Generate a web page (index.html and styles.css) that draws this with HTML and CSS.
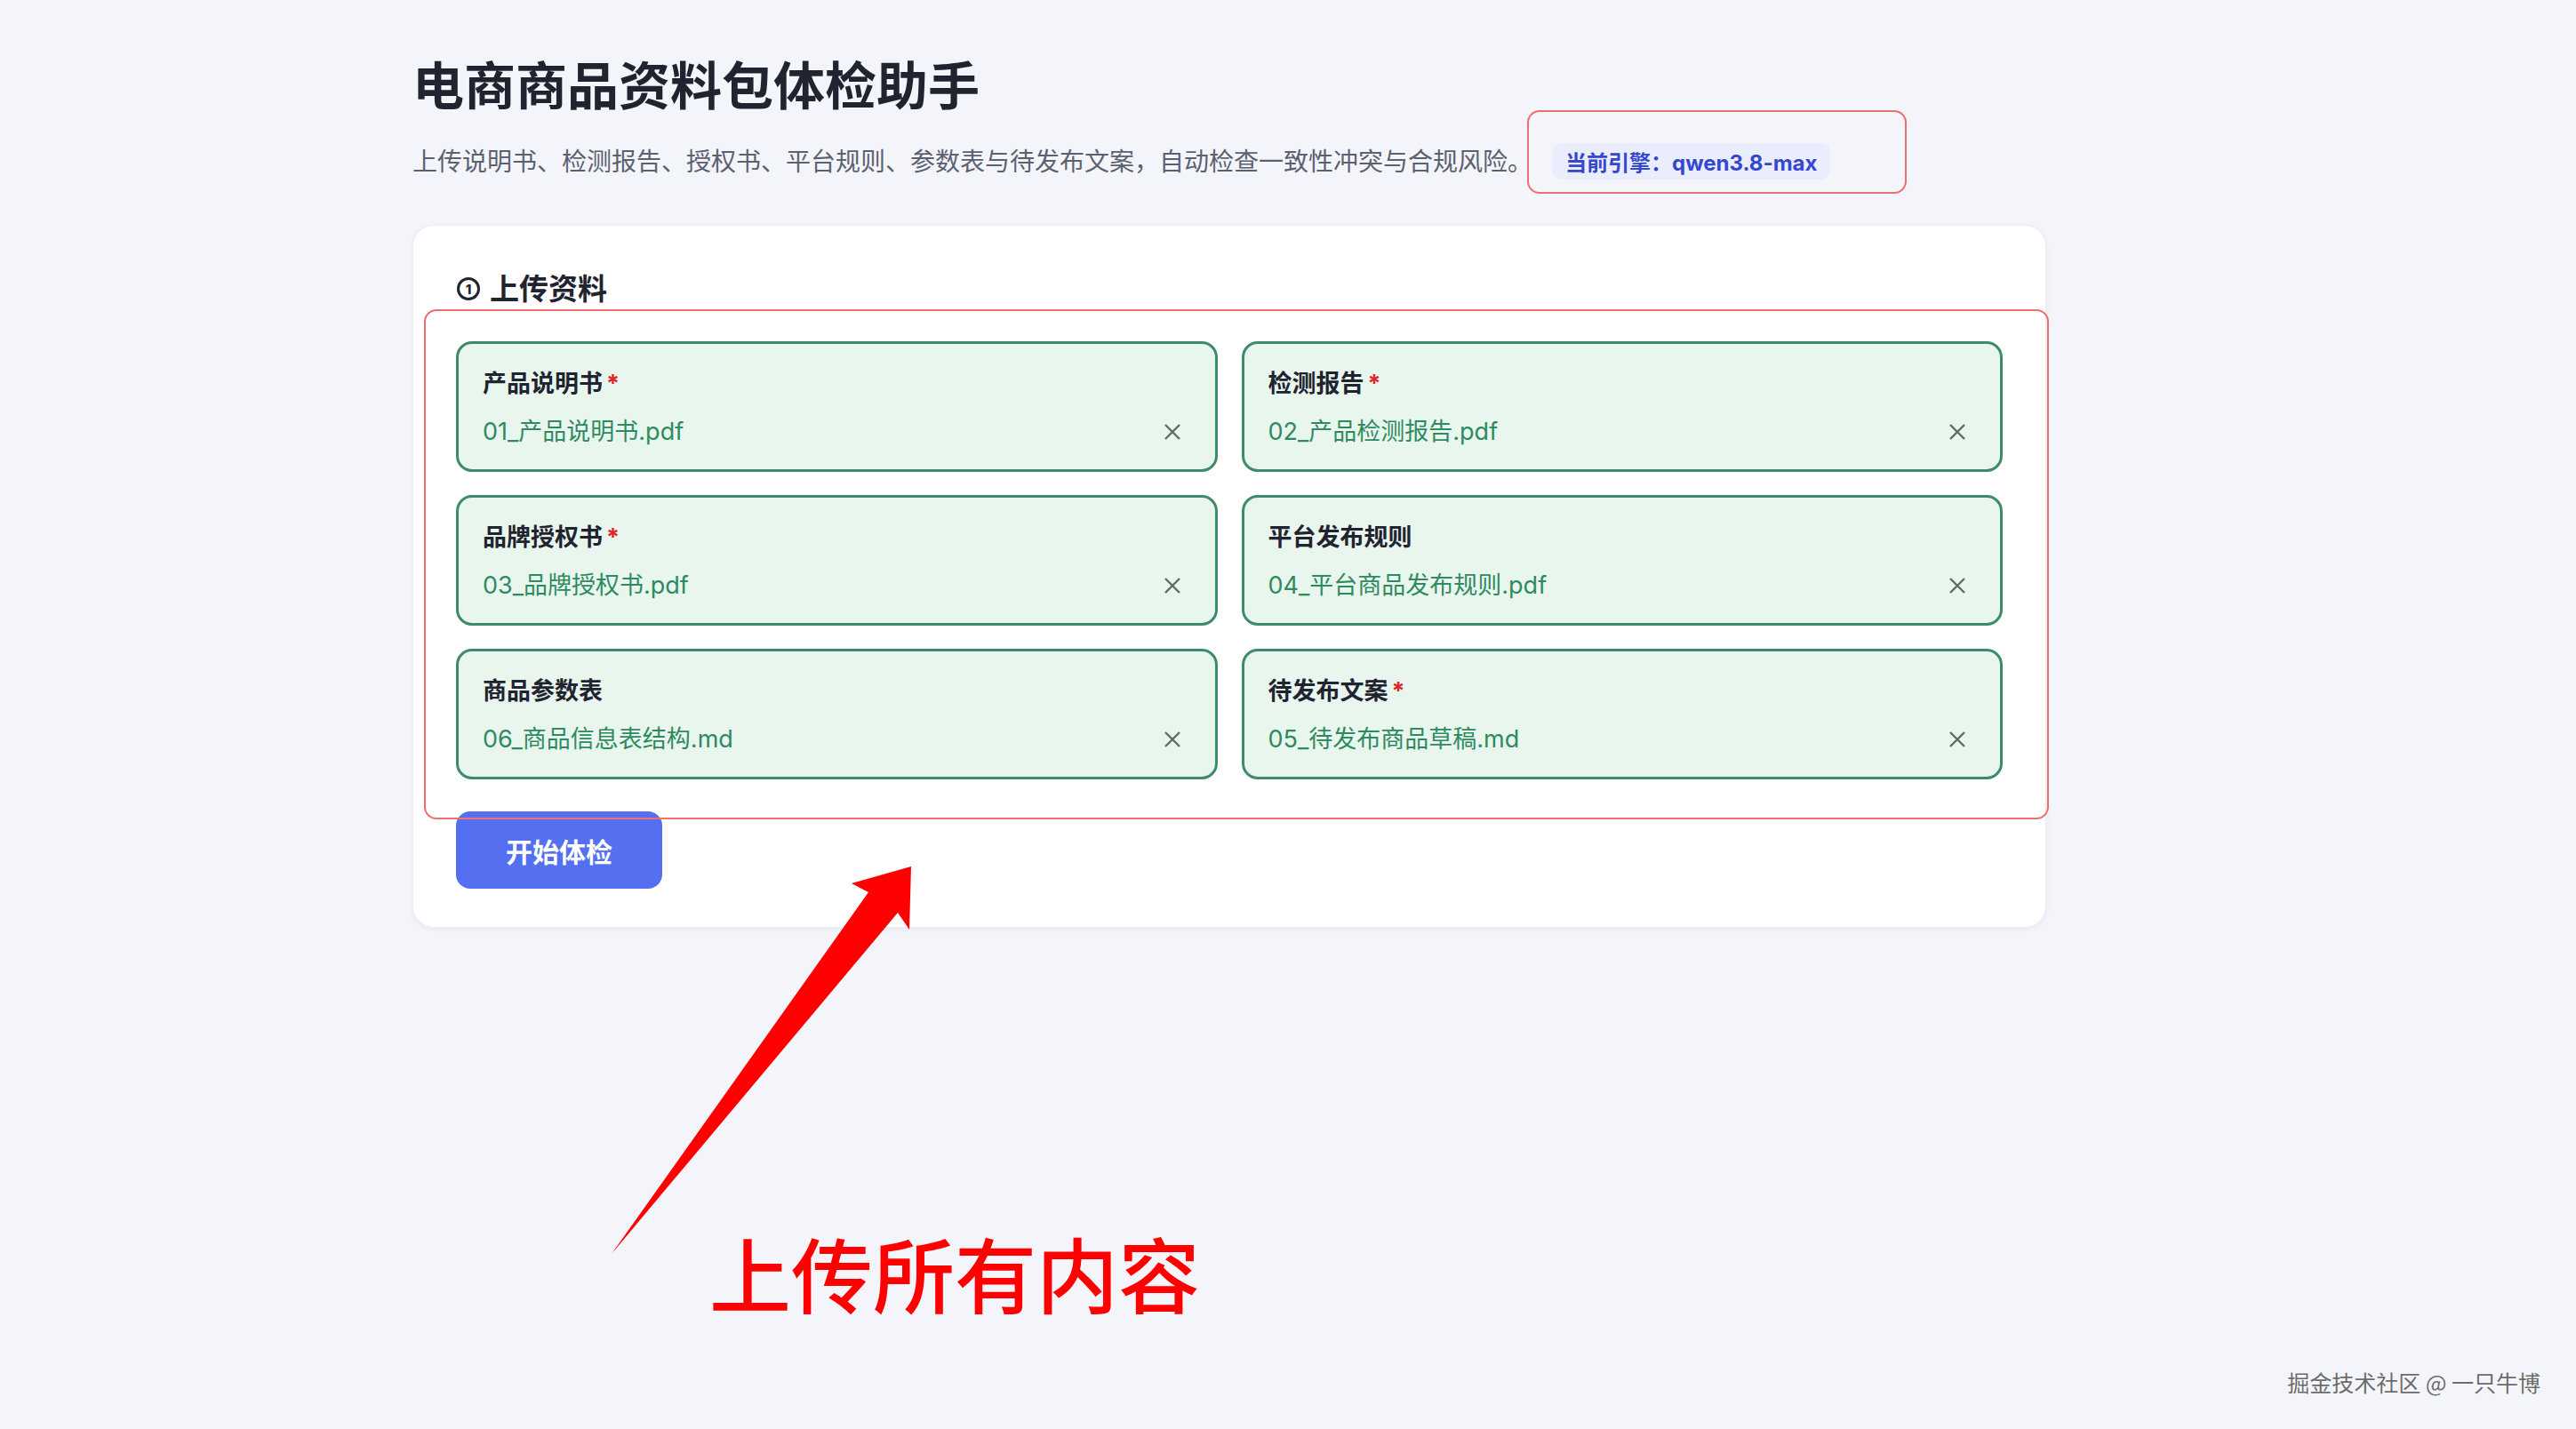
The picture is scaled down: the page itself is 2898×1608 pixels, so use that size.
FILE: index.html
```html
<!DOCTYPE html>
<html lang="zh-CN">
<head>
<meta charset="utf-8">
<title>电商商品资料包体检助手</title>
<link rel="stylesheet" href="styles.css">
</head>
<body>
<div class="page">
  <header class="hero">
    <h1 class="title">电商商品资料包体检助手</h1>
    <div class="sub-row">
      <p class="subtitle">上传说明书、检测报告、授权书、平台规则、参数表与待发布文案，自动检查一致性冲突与合规风险。</p>
      <div class="engine">当前引擎：qwen3.8-max<span class="mark mark-engine"></span></div>
    </div>
  </header>

  <section class="card">
    <h2 class="card-title"><span class="step">1</span>上传资料</h2>
    <div class="grid-wrap">
      <div class="file-grid">
        <div class="file">
          <div class="file-label">产品说明书<span class="req">*</span></div>
          <div class="file-row"><span class="file-name">01_产品说明书.pdf</span><svg class="x" viewBox="0 0 20 20"><path d="M2 2L18 18M18 2L2 18"/></svg></div>
        </div>
        <div class="file">
          <div class="file-label">检测报告<span class="req">*</span></div>
          <div class="file-row"><span class="file-name">02_产品检测报告.pdf</span><svg class="x" viewBox="0 0 20 20"><path d="M2 2L18 18M18 2L2 18"/></svg></div>
        </div>
        <div class="file">
          <div class="file-label">品牌授权书<span class="req">*</span></div>
          <div class="file-row"><span class="file-name">03_品牌授权书.pdf</span><svg class="x" viewBox="0 0 20 20"><path d="M2 2L18 18M18 2L2 18"/></svg></div>
        </div>
        <div class="file">
          <div class="file-label">平台发布规则</div>
          <div class="file-row"><span class="file-name">04_平台商品发布规则.pdf</span><svg class="x" viewBox="0 0 20 20"><path d="M2 2L18 18M18 2L2 18"/></svg></div>
        </div>
        <div class="file">
          <div class="file-label">商品参数表</div>
          <div class="file-row"><span class="file-name">06_商品信息表结构.md</span><svg class="x" viewBox="0 0 20 20"><path d="M2 2L18 18M18 2L2 18"/></svg></div>
        </div>
        <div class="file">
          <div class="file-label">待发布文案<span class="req">*</span></div>
          <div class="file-row"><span class="file-name">05_待发布商品草稿.md</span><svg class="x" viewBox="0 0 20 20"><path d="M2 2L18 18M18 2L2 18"/></svg></div>
        </div>
      </div>
      <span class="mark mark-grid"></span>
    </div>
    <button class="start" type="button">开始体检</button>
  </section>
</div>

<svg class="annot-arrow" viewBox="0 0 2898 1608" width="2898" height="1608">
  <polygon points="1025,975 1023,1046 1010,1027 688,1411 977,1004 958,994" fill="#ff0000"/>
</svg>
<div class="annot-text">上传所有内容</div>
<div class="watermark">掘金技术社区 @ 一只牛博</div>
</body>
</html>
```

FILE: styles.css
```css
* { box-sizing: border-box; }

html, body {
  margin: 0;
  padding: 0;
}

body {
  position: relative;
  min-height: 1608px;
  background: #f4f5fb;
  font-family: "Inter", "Noto Sans CJK SC", "Noto Sans", sans-serif;
  color: #1f2430;
}

.page {
  padding: 57px 0 0 464px;
  width: 2302px;
}

.hero {
  display: flex;
  flex-direction: column;
}

.title {
  margin: 0;
  font-size: 58px;
  line-height: 80px;
  font-weight: 700;
  color: #1f2430;
}

.sub-row {
  margin-top: 24px;
  display: flex;
  align-items: center;
  gap: 22px;
  height: 41px;
}

.subtitle {
  margin: 0;
  font-size: 28px;
  line-height: 40px;
  color: #5b6170;
}

.engine {
  position: relative;
  height: 41px;
  display: flex;
  align-items: center;
  padding: 0 15px;
  background: #eaedfb;
  border-radius: 10px;
  font-size: 24px;
  font-weight: 700;
  color: #3547cf;
  white-space: nowrap;
}

.mark {
  position: absolute;
  border: 2px solid #ef6f6f;
  border-radius: 14px;
  pointer-events: none;
}

.mark-engine {
  left: -28px;
  top: -37px;
  right: -86px;
  bottom: -16px;
}

.card {
  margin-top: 51px;
  background: #ffffff;
  border: 1px solid #eceef4;
  border-radius: 24px;
  box-shadow: 0 2px 6px rgba(30, 40, 80, 0.05);
  padding: 47px 48px 43px 48px;
}

.card-title {
  margin: 0 0 35px 0;
  font-size: 33px;
  line-height: 48px;
  font-weight: 700;
  color: #1f2430;
  display: flex;
  align-items: center;
}

.step {
  width: 26px;
  height: 26px;
  border: 3.5px solid #1f2430;
  border-radius: 50%;
  display: flex;
  align-items: center;
  justify-content: center;
  font-family: "Inter", sans-serif;
  font-size: 15px;
  line-height: 1;
  font-weight: 800;
  margin: 0 11px 0 1px;
}

.grid-wrap {
  position: relative;
}

.mark-grid {
  left: -36px;
  top: -36px;
  right: -52px;
  bottom: -45px;
  border-radius: 14px;
}

.file-grid {
  display: grid;
  grid-template-columns: 1fr 1fr;
  column-gap: 27px;
  row-gap: 26px;
}

.file {
  height: 147px;
  border: 3px solid #3d8b6a;
  border-radius: 18px;
  background: #e8f6ee;
  padding: 27px 27px 24px 27px;
  display: flex;
  flex-direction: column;
  gap: 18px;
}

.file-label {
  font-size: 27px;
  line-height: 36px;
  font-weight: 700;
  color: #1f2430;
}

.req {
  color: #e02424;
  margin-left: 4px;
}

.file-row {
  display: flex;
  align-items: center;
  justify-content: space-between;
  height: 36px;
}

.file-name {
  font-size: 27px;
  line-height: 36px;
  color: #2f8a60;
}

.x {
  width: 20px;
  height: 20px;
  margin-right: 11px;
  fill: none;
  stroke: #5f6a66;
  stroke-width: 2.4;
}

.start {
  margin-top: 36px;
  width: 232px;
  height: 87px;
  border: none;
  border-radius: 16px;
  background: #5470f0;
  color: #ffffff;
  font-family: "Noto Sans CJK SC", sans-serif;
  font-size: 30px;
  font-weight: 700;
  display: flex;
  align-items: center;
  justify-content: center;
  padding: 0;
}

.annot-arrow {
  position: absolute;
  left: 0;
  top: 0;
  pointer-events: none;
}

.annot-text {
  position: absolute;
  left: 798px;
  top: 1378px;
  font-family: "Noto Sans CJK SC", sans-serif;
  font-size: 92px;
  line-height: 106px;
  font-weight: 500;
  color: #ff0000;
  white-space: nowrap;
}

.watermark {
  position: absolute;
  right: 40px;
  top: 1537px;
  font-family: "Noto Sans CJK SC", sans-serif;
  font-size: 25px;
  line-height: 36px;
  color: #6b6b6b;
  text-shadow: 0 0 2px #ffffff;
  white-space: nowrap;
}
```
